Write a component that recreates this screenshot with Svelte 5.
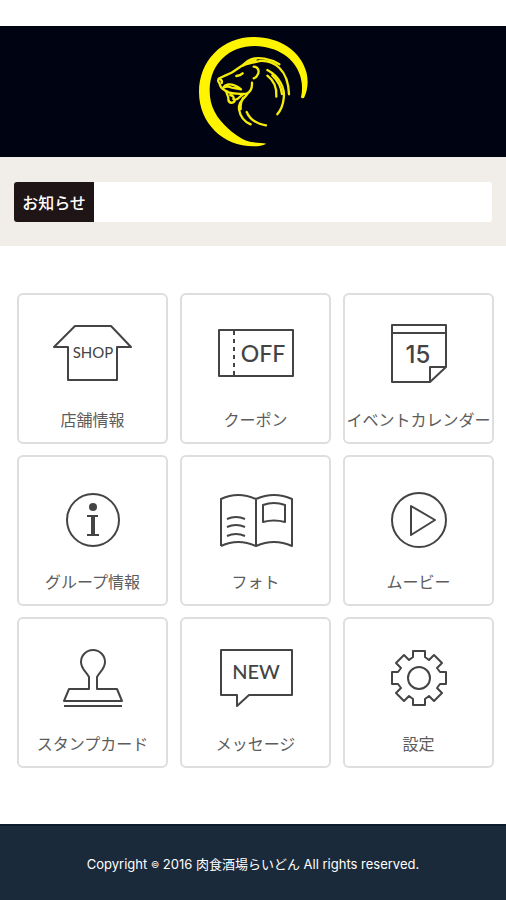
<script lang="ts">
  type Item = {
    key: string;
    label: string;
  };

  const items: Item[] = [
    { key: 'shop', label: '店舗情報' },
    { key: 'coupon', label: 'クーポン' },
    { key: 'calendar', label: 'イベントカレンダー' },
    { key: 'group', label: 'グループ情報' },
    { key: 'photo', label: 'フォト' },
    { key: 'movie', label: 'ムービー' },
    { key: 'stamp', label: 'スタンプカード' },
    { key: 'message', label: 'メッセージ' },
    { key: 'settings', label: '設定' },
  ];

  // One quarter of the gear outline, repeated four times around the centre
  const tooth = [
    [-6, -27], [6, -27], [6, -21], [10, -18], [15, -23], [23, -15], [18, -10], [21, -6],
  ];
  const gear = [0, 1, 2, 3]
    .flatMap((turn) =>
      tooth.map(([x, y]) => {
        for (let i = 0; i < turn; i++) [x, y] = [-y, x];
        return `${x + 51},${y + 37}`;
      })
    )
    .join(' ');
</script>

<div class="page">
  <header class="header">
    <svg class="logo" viewBox="0 0 438 393" role="img" aria-label="肉食酒場らいどん">
      <path
        class="moon"
        d="M366 217 L372 216 C382 195 386 170 380 142 C364 76 300 33 221 33 C126 33 57 105 57 198 C57 290 128 361 221 361 C236 361 248 359 259 353 C246 349 229 351 213 348 C190 343 168 329 146 309 C108 275 88 240 89 190 C91 112 148 60 225 60 C292 61 345 98 360 148 C367 170 368 192 363 214 Z"
      />
      <g class="lion">
        <path d="M298 115 C270 97 236 92 213 100 C201 104 195 112 188 118 L158 138 C145 145 130 151 119 156 C111 161 115 168 119 173 C120 182 125 188 134 193 L146 199 C158 204 172 202 185 204 L200 203 C212 198 217 190 216 170" />
        <path d="M200 112 C208 104 220 105 227 101 M188 119 C207 109 226 110 239 105 C282 102 325 131 327 205" />
        <path d="M221 122 C235 123 239 135 233 146 C231 152 227 155 221 157" />
        <path d="M169 150 C176 149 183 147 188 142 M119 158 C126 162 127 166 125 171" />
        <path d="M130 185 C136 174 151 173 163 178 C173 181 178 185 183 190 C170 186 159 188 149 183 C143 181 137 182 130 185" />
        <path d="M139 197 C140 207 147 211 145 220 C146 233 163 234 165 221 C176 222 178 211 187 207 M151 207 C159 209 163 214 160 219" />
        <path d="M203 202 C194 218 174 226 177 250 C180 268 190 286 212 295 M190 215 C181 230 181 239 182 249" />
        <path d="M200 258 C208 277 226 293 258 298" />
        <path d="M262 132 C298 151 316 186 311 218 C309 237 303 252 292 265" />
        <path d="M262 149 C282 164 291 187 289 212 M277 148 C296 166 303 180 306 204" />
      </g>
    </svg>
  </header>

  <section class="notice">
    <div class="notice-bar">
      <h2 class="notice-title">お知らせ</h2>
    </div>
  </section>

  <nav class="menu">
    {#each items as item (item.key)}
      <button class="card">
        <svg class="icon" viewBox="0 0 101 76" aria-hidden="true">
          {#if item.key === 'shop'}
            <path d="M12 30 L33 9 H69 L89 30 H75 V63 H26 V30 Z" />
            <text x="51" y="41" class="small">SHOP</text>
          {:else if item.key === 'coupon'}
            <rect x="14" y="13" width="74" height="46" />
            <path d="M29 14 V59" stroke-dasharray="4 4" />
            <text x="58" y="45" class="large">OFF</text>
          {:else if item.key === 'calendar'}
            <path d="M24 8 H78 V50 L62 65 H24 Z M24 16 H78 M62 65 V50 H78" />
            <text x="50" y="46" class="date">15</text>
          {:else if item.key === 'group'}
            <circle cx="51" cy="41" r="26" />
            <circle class="solid" cx="51" cy="28" r="4" />
            <path class="solid" d="M45 36 H56 V38 H53 V55 H57 V57 H45 V55 H49 V38 H45 Z" />
          {:else if item.key === 'photo'}
            <path d="M16 67 V20 Q33 12 51 20 Q69 12 87 20 V67 Q69 59 51 67 Q33 59 16 67 M51 20 V67" />
            <path d="M22 40 Q31 36 40 40 M22 48 Q31 44 40 48 M22 57 Q31 53 40 57" />
            <path d="M58 26 Q69 22 80 26 V43 Q69 40 58 43 Z" />
          {:else if item.key === 'movie'}
            <circle cx="51" cy="41" r="27" />
            <path d="M43 27 L67 41 L43 56 Z" />
          {:else if item.key === 'stamp'}
            <path d="M47 48 V36 C44 30 39 28 39 21 A12 12 0 0 1 63 21 C63 28 58 30 55 36 V48 H75 L80 60 H22 L27 48 Z M22 65 H80" />
          {:else if item.key === 'message'}
            <path d="M16 9 H87 V54 H44 L32 65 V54 H16 Z" />
            <text x="51" y="38" class="medium">NEW</text>
          {:else}
            <polygon points={gear} />
            <circle cx="51" cy="37" r="11" />
          {/if}
        </svg>
        <span class="label">{item.label}</span>
      </button>
    {/each}
  </nav>

  <footer class="footer">
    <small class="copyright">Copyright <span class="mark">©</span> 2016 肉食酒場らいどん All rights reserved.</small>
  </footer>
</div>

<style>
  :global(body) {
    margin: 0;
    background: #fff;
  }

  .page {
    display: flex;
    flex-direction: column;
    min-height: 100vh;
    box-sizing: border-box;
    padding-top: 26px;
    font-family: 'Liberation Sans', 'Noto Sans CJK JP', sans-serif;
  }

  .header {
    display: flex;
    justify-content: center;
    background: #000312;
  }

  .logo {
    width: 146px;
    height: 131px;
  }

  .moon {
    fill: #fff500;
  }

  .lion {
    fill: none;
    stroke: #f5ec0a;
    stroke-width: 7;
    stroke-linecap: round;
    stroke-linejoin: round;
  }

  .notice {
    padding: 25px 14px 24px;
    background: #f1eeea;
  }

  .notice-bar {
    display: flex;
    height: 40px;
    background: #fff;
    border-radius: 3px;
  }

  .notice-title {
    display: flex;
    align-items: center;
    justify-content: center;
    width: 80px;
    margin: 0;
    background: #201516;
    border-radius: 3px 0 0 3px;
    color: #fff;
    font-size: 16px;
    font-weight: 500;
  }

  .menu {
    display: grid;
    grid-template-columns: repeat(3, 1fr);
    gap: 11px 12px;
    padding: 47px 12px 24px 17px;
  }

  .card {
    display: flex;
    flex-direction: column;
    align-items: center;
    box-sizing: border-box;
    min-width: 0;
    height: 151px;
    padding: 22px 0 0;
    border: 2px solid #dedede;
    border-radius: 6px;
    background: #fff;
    color: #5c5c5c;
    font-family: inherit;
    cursor: pointer;
  }

  .icon {
    width: 101px;
    height: 76px;
    fill: none;
    stroke: #444;
    stroke-width: 2;
    stroke-linejoin: round;
  }

  .icon text {
    fill: #444;
    stroke: none;
    font-family: Lato, sans-serif;
    font-weight: 500;
    text-anchor: middle;
  }

  .icon .solid {
    fill: #444;
    stroke: none;
  }

  .icon .small {
    font-size: 15px;
    font-weight: 400;
  }

  .icon .medium {
    font-size: 20px;
  }

  .icon .large {
    font-size: 23px;
  }

  .icon .date {
    font-family: Inter, sans-serif;
    font-size: 24px;
  }

  .label {
    margin-top: 16px;
    font-size: 16px;
    line-height: 24px;
    white-space: nowrap;
  }

  .footer {
    display: flex;
    align-items: center;
    justify-content: center;
    height: 76px;
    box-sizing: border-box;
    margin-top: auto;
    border-top: 2px solid #0c1b2e;
    background: #1b2a3b;
  }

  .copyright {
    color: #fff;
    font-family: Inter, 'Noto Sans CJK JP', sans-serif;
    font-size: 13px;
  }

  .mark {
    font-size: 9px;
    vertical-align: 1px;
  }
</style>
